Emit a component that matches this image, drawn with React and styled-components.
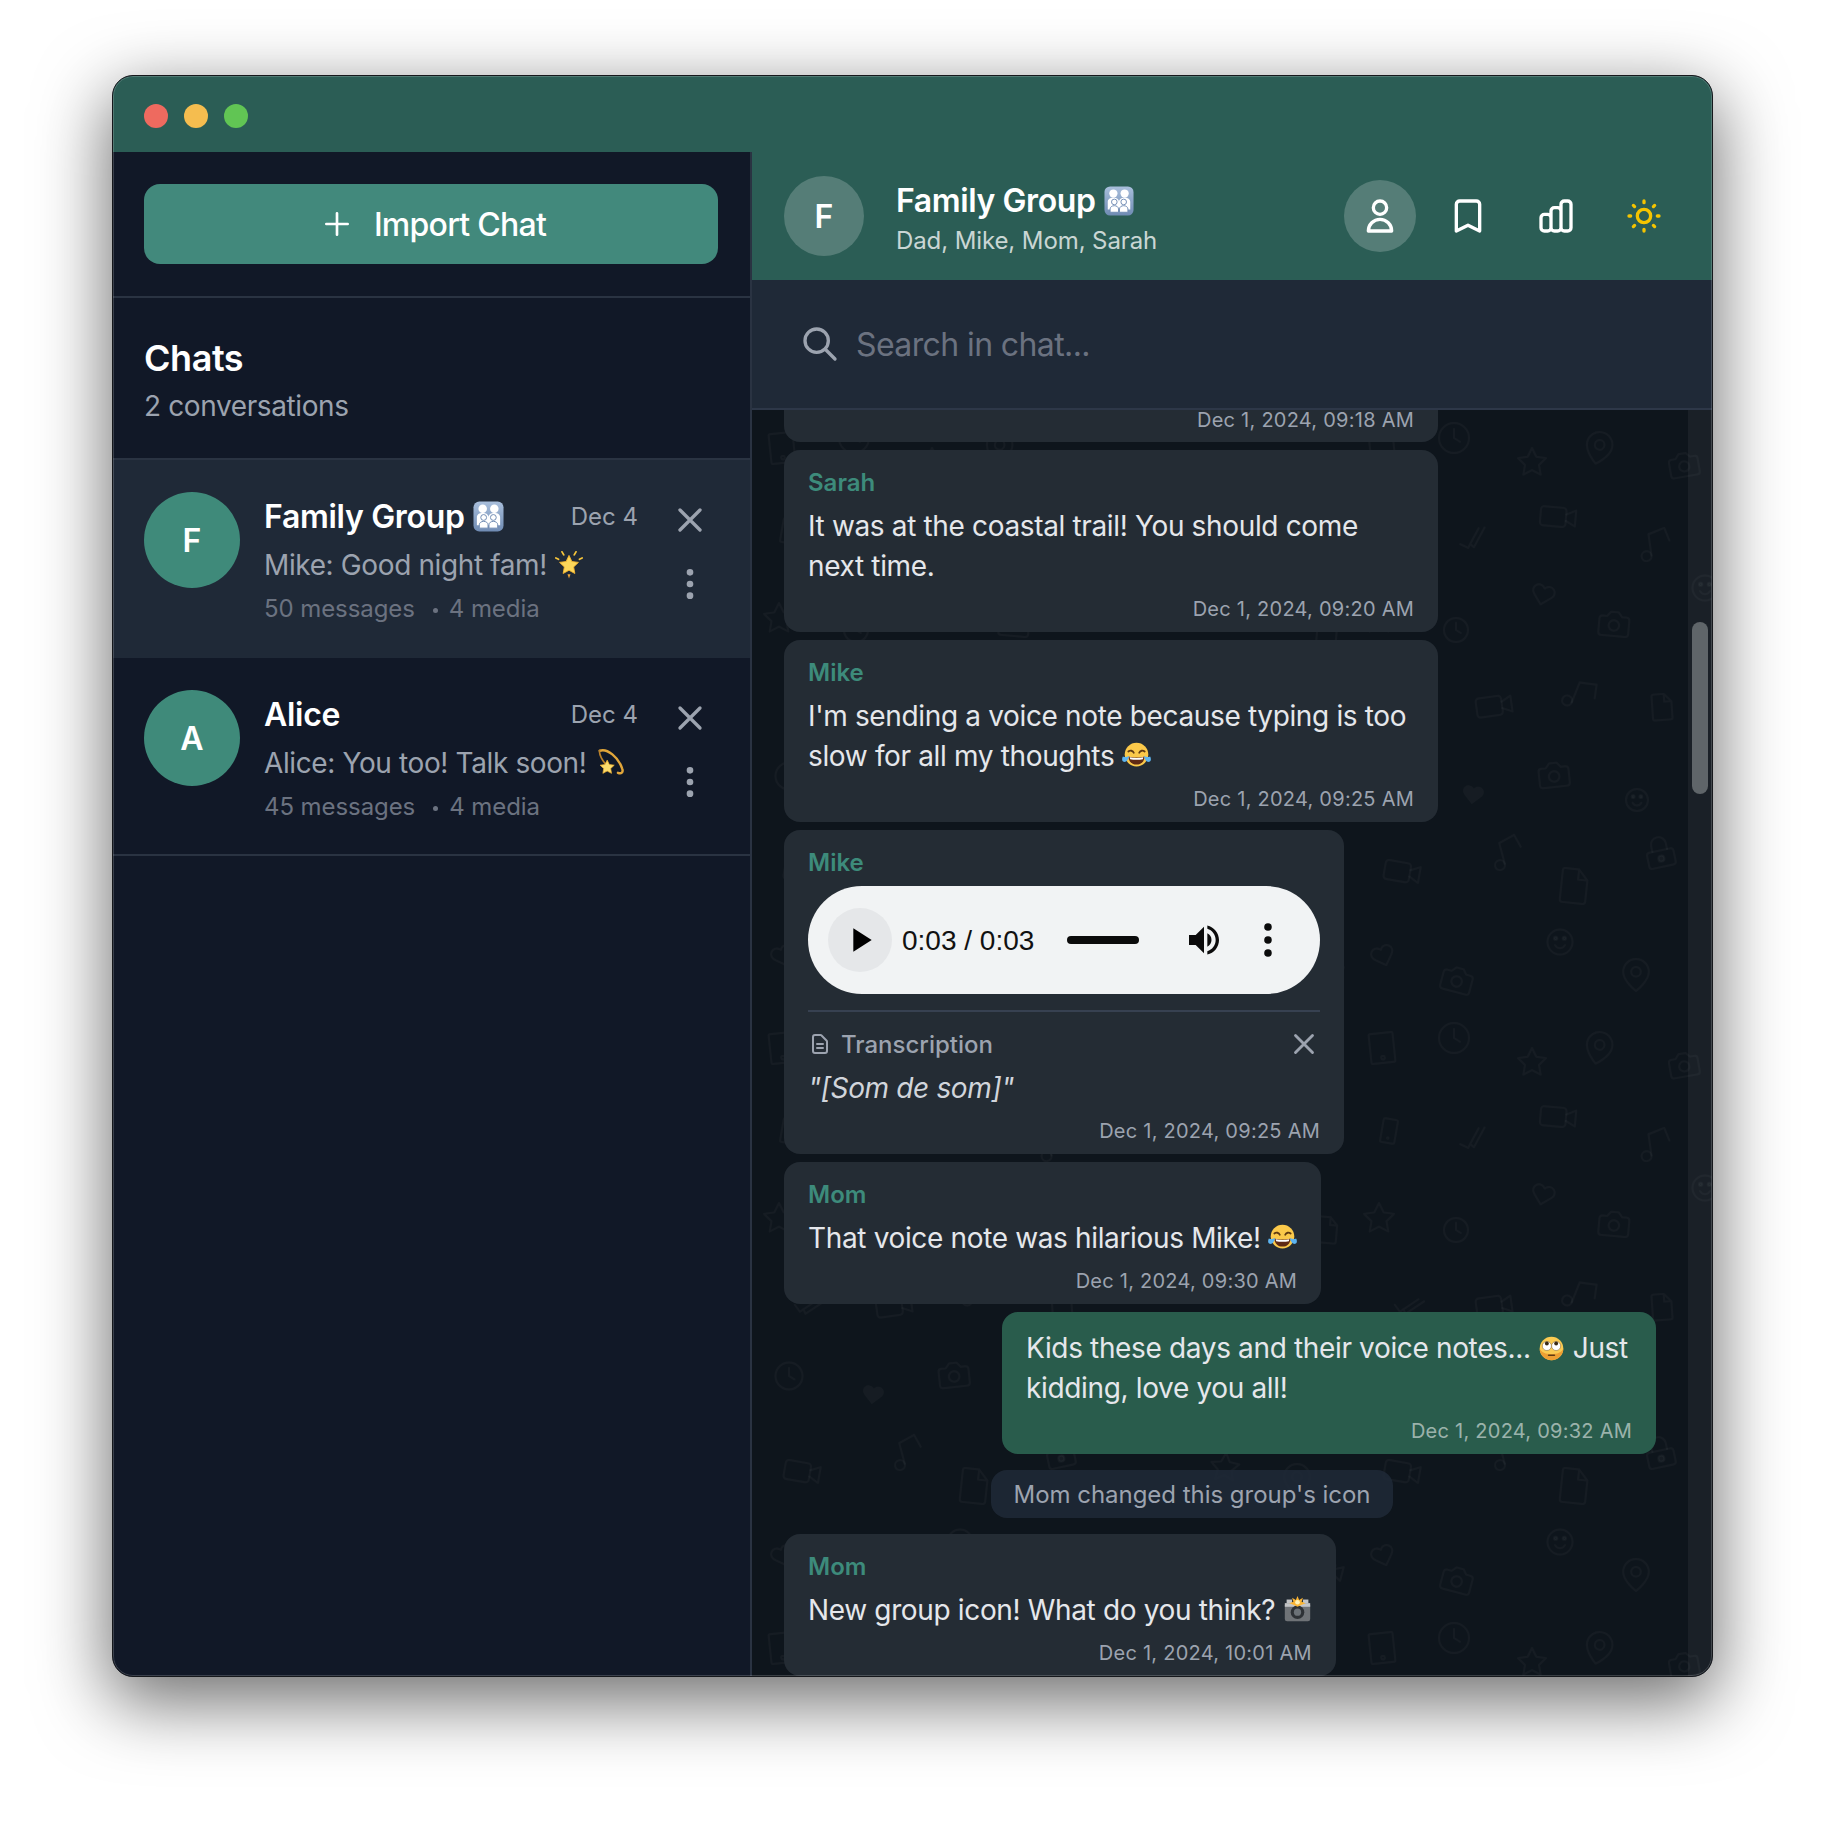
import React from "react";
import styled, { createGlobalStyle } from "styled-components";
import {
  HiOutlineBookmark,
  HiOutlineChartBar,
  HiOutlineDocumentText,
  HiOutlineDotsVertical,
  HiOutlinePlus,
  HiOutlineSearch,
  HiOutlineSun,
  HiOutlineUser,
  HiOutlineX
} from "react-icons/hi";
import { MdPlayArrow, MdVolumeUp } from "react-icons/md";

const GlobalStyle = createGlobalStyle`
  * { box-sizing: border-box; }
  html, body { margin: 0; background: #fff; }
  body { font-family: Inter, "Noto Sans", sans-serif; }
  button, input { font-family: inherit; }
`;

const Page = styled.div`
  width: 1824px;
  height: 1824px;
  padding: 75px 0 0 112px;
`;

const Window = styled.div`
  position: relative;
  width: 1601px;
  height: 1602px;
  display: flex;
  flex-direction: column;
  border: 1px solid #16181c;
  border-radius: 21px;
  overflow: hidden;
  background: #111827;
  box-shadow: 0 22px 70px 4px rgba(0, 0, 0, 0.56);
  &::after {
    content: "";
    position: absolute;
    inset: 0;
    border: 1px solid rgba(255, 255, 255, 0.18);
    border-radius: 20px;
    pointer-events: none;
  }
`;

const TitleBar = styled.div`
  flex: 0 0 76px;
  display: flex;
  align-items: center;
  gap: 16px;
  padding: 4px 0 0 31px;
  background: #2b5d55;
`;

const Light = styled.span`
  width: 24px;
  height: 24px;
  border-radius: 50%;
  background: ${(p) => p.$color};
`;

const Body = styled.div`
  flex: 1;
  min-height: 0;
  display: flex;
`;

const Sidebar = styled.aside`
  flex: 0 0 639px;
  display: flex;
  flex-direction: column;
  background: #111827;
  border-right: 2px solid #2a3342;
`;

const ImportArea = styled.div`
  padding: 32px 32px 32px 31px;
  border-bottom: 2px solid #2a3342;
`;

const ImportButton = styled.button`
  width: 100%;
  height: 80px;
  display: flex;
  align-items: center;
  justify-content: center;
  gap: 21px;
  padding: 0 0 0 5px;
  border: none;
  border-radius: 16px;
  background: #42897c;
  color: #fff;
  font-size: 32px;
  font-weight: 500;
  letter-spacing: -0.74px;
  cursor: pointer;
`;

const ChatsHeading = styled.div`
  height: 162px;
  padding: 36px 31px 0;
  border-bottom: 2px solid #2a3342;
`;

const ChatsTitle = styled.h2`
  margin: 0;
  font-size: 36px;
  line-height: 48px;
  font-weight: 600;
  letter-spacing: -0.45px;
  color: #fff;
`;

const ChatsCount = styled.p`
  margin: 4px 0 0;
  font-size: 28px;
  line-height: 40px;
  letter-spacing: -0.39px;
  color: #9ca3af;
`;

const ChatRow = styled.div`
  display: flex;
  gap: 24px;
  padding: 32px 32px 31px 31px;
  background: ${(p) => (p.$active ? "#1f2937" : "transparent")};
  border-bottom: 2px solid ${(p) => (p.$active ? "#1f2937" : "#2a3342")};
`;

const Avatar = styled.div`
  flex: 0 0 ${(p) => p.$size}px;
  height: ${(p) => p.$size}px;
  display: flex;
  align-items: center;
  justify-content: center;
  border-radius: 50%;
  background: ${(p) => p.$bg};
  color: #fff;
  font-size: 32px;
  font-weight: 600;
`;

const ChatInfo = styled.div`
  flex: 1;
  min-width: 0;
`;

const ChatTop = styled.div`
  display: flex;
  align-items: center;
  justify-content: space-between;
  height: 48px;
`;

const ChatName = styled.span`
  font-size: 32px;
  font-weight: 600;
  letter-spacing: -0.3px;
  color: #fff;
  white-space: nowrap;
`;

const ChatDate = styled.span`
  font-size: 24px;
  color: #9ca3af;
`;

const ChatPreview = styled.div`
  margin-top: 5px;
  font-size: 28px;
  line-height: 40px;
  letter-spacing: -0.38px;
  color: #9ca3af;
  white-space: nowrap;
`;

const ChatMeta = styled.div`
  display: flex;
  align-items: center;
  margin-top: 8px;
  font-size: 24px;
  line-height: 32px;
  letter-spacing: -0.08px;
  color: #6b7280;
`;

const MetaDot = styled.span`
  width: 5px;
  height: 5px;
  margin: 2px 11px 0 18px;
  border-radius: 50%;
  background: #6b7280;
`;

const ChatActions = styled.div`
  flex: 0 0 56px;
  display: flex;
  flex-direction: column;
  gap: 8px;
`;

const GhostButton = styled.button`
  width: ${(p) => p.$size || 56}px;
  height: ${(p) => p.$size || 56}px;
  display: flex;
  align-items: center;
  justify-content: center;
  padding: 0;
  border: none;
  border-radius: 50%;
  background: ${(p) => (p.$active ? "rgba(255, 255, 255, 0.2)" : "transparent")};
  color: ${(p) => p.$color || "#9ca3af"};
  cursor: pointer;
`;

const Main = styled.main`
  flex: 1;
  min-width: 0;
  display: flex;
  flex-direction: column;
`;

const ChatHeader = styled.header`
  flex: 0 0 128px;
  display: flex;
  align-items: center;
  gap: 32px;
  padding: 0 32px;
  background: #2b5d55;
`;

const HeaderInfo = styled.div`
  flex: 1;
  padding-top: 4px;
`;

const HeaderName = styled.div`
  font-size: 32px;
  line-height: 44px;
  font-weight: 600;
  letter-spacing: -0.4px;
  color: #fff;
`;

const HeaderSub = styled.div`
  margin-top: 2px;
  font-size: 24px;
  line-height: 32px;
  letter-spacing: -0.1px;
  color: rgba(255, 255, 255, 0.75);
`;

const HeaderTools = styled.div`
  display: flex;
  gap: 16px;
`;

const SearchBar = styled.div`
  flex: 0 0 130px;
  display: flex;
  align-items: center;
  gap: 14px;
  padding-left: 48px;
  background: #1f2937;
  border-bottom: 2px solid #2d3748;
  color: #9ca3af;
`;

const SearchInput = styled.input`
  flex: 1;
  border: none;
  outline: none;
  background: transparent;
  font-size: 32px;
  letter-spacing: -0.6px;
  color: #e5e7eb;
  &::placeholder {
    color: #6b7280;
    opacity: 1;
  }
`;

const Pane = styled.div`
  position: relative;
  flex: 1;
  min-height: 0;
  display: flex;
  background: #0e151c;
`;

const Wallpaper = styled.svg`
  position: absolute;
  inset: 0;
  width: 100%;
  height: 100%;
`;

const MessageList = styled.div`
  position: relative;
  flex: 1;
  min-width: 0;
  display: flex;
  flex-direction: column;
  gap: 8px;
  padding: 0 32px;
  overflow: hidden;
`;

const ScrollTrack = styled.div`
  position: relative;
  flex: 0 0 24px;
  padding: 212px 4px 0;
  background: rgba(255, 255, 255, 0.05);
`;

const ScrollThumb = styled.div`
  height: 172px;
  border-radius: 8px;
  background: #5f6569;
`;

const Bubble = styled.div`
  flex: 0 0 auto;
  align-self: ${(p) => (p.$mine ? "flex-end" : "flex-start")};
  max-width: 75%;
  padding: ${(p) => (p.$mine ? "16px" : "17px")} 24px 9px;
  border-radius: 16px;
  background: ${(p) => (p.$mine ? "#295c4c" : "#242c34")};
`;

const ClippedBubble = styled.div`
  flex: 0 0 32px;
  width: 654px;
  padding: 0 24px;
  border-radius: 0 0 16px 16px;
  background: #242c34;
`;

const ClippedTime = styled.div`
  font-size: 20px;
  line-height: 20px;
  letter-spacing: 0.25px;
  text-align: right;
  color: #9ca3af;
`;

const Sender = styled.div`
  margin-bottom: 7px;
  font-size: 24px;
  line-height: 32px;
  font-weight: 600;
  color: #3d8b7b;
`;

const MessageText = styled.div`
  font-size: 28px;
  line-height: 40px;
  letter-spacing: -0.35px;
  color: #e5e7eb;
`;

const Time = styled.div`
  margin-top: 9px;
  font-size: 20px;
  line-height: 28px;
  letter-spacing: 0.25px;
  text-align: right;
  color: ${(p) => (p.$mine ? "rgba(255, 255, 255, 0.55)" : "#9ca3af")};
`;

const SystemNote = styled.div`
  flex: 0 0 48px;
  align-self: center;
  margin: 8px 56px 8px 0;
  padding: 9px 23px 7px;
  border-radius: 16px;
  background: rgba(31, 41, 55, 0.88);
  font-size: 24px;
  line-height: 32px;
  letter-spacing: -0.03px;
  color: #9ca3af;
`;

const Player = styled.div`
  width: 512px;
  height: 108px;
  display: flex;
  align-items: center;
  padding-left: 20px;
  border-radius: 54px;
  background: #f1f3f4;
  color: #0b0b0b;
`;

const PlayButton = styled.div`
  width: 64px;
  height: 64px;
  display: flex;
  align-items: center;
  justify-content: center;
  border-radius: 50%;
  background: #e5e7e9;
  color: #000;
`;

const PlayerTime = styled.span`
  margin-left: 10px;
  padding-top: 2px;
  font-family: "Liberation Sans", Arial, sans-serif;
  font-size: 28px;
  color: #111;
  white-space: nowrap;
`;

const PlayerSlider = styled.div`
  width: 72px;
  height: 8px;
  margin-left: 33px;
  border-radius: 4px;
  background: #0b0b0b;
`;

const PlayerVolume = styled.div`
  display: flex;
  margin-left: 45px;
`;

const PlayerMenu = styled.svg`
  width: 8px;
  height: 34px;
  margin-left: 40px;
  fill: #0b0b0b;
`;

const Transcript = styled.div`
  margin-top: 16px;
  padding-top: 16px;
  border-top: 2px solid #374151;
`;

const TranscriptHead = styled.div`
  display: flex;
  align-items: center;
  height: 32px;
  margin-right: -1px;
  color: #9ca3af;
`;

const TranscriptLabel = styled.span`
  flex: 1;
  margin-left: 9px;
  font-size: 24px;
  font-weight: 500;
`;

const TranscriptText = styled.div`
  margin-top: 8px;
  font-size: 28px;
  line-height: 40px;
  font-style: italic;
  letter-spacing: -0.35px;
  color: #d1d5db;
`;

const EmojiBox = styled.svg`
  display: inline-block;
  width: ${(p) => p.$size}px;
  height: ${(p) => p.$size}px;
  margin-left: ${(p) => p.$gap ?? 0}px;
  vertical-align: ${(p) => p.$drop ?? -4}px;
`;

function Emoji({ name, size = 29, gap, drop }) {
  return (
    <EmojiBox viewBox="0 0 32 32" $size={size} $gap={gap} $drop={drop} role="img" aria-label={name}>
      {EMOJI[name]}
    </EmojiBox>
  );
}

const EMOJI = {
  family: (
    <>
      <defs>
        <linearGradient id="famBg" x1="0" y1="0" x2="0" y2="1">
          <stop offset="0" stopColor="#a9bfdc" />
          <stop offset="1" stopColor="#6f8bb3" />
        </linearGradient>
      </defs>
      <rect x="0.5" y="0.5" width="31" height="31" rx="6" fill="url(#famBg)" />
      <g fill="#fff">
        <circle cx="10" cy="8" r="4.4" />
        <circle cx="22" cy="8" r="4.4" />
        <path d="M4 25v-8c0-3 2.5-4.5 6-4.5s6 1.5 6 4.5c0-3 2.5-4.5 6-4.5s6 1.5 6 4.5v8z" />
      </g>
      <g fill="#fff" stroke="#6f8bb3" strokeWidth="1">
        <circle cx="11" cy="17" r="3" />
        <circle cx="21" cy="17" r="3" />
        <path d="M6.5 28v-3.5c0-2 2-3.5 4.5-3.5s4.5 1.5 4.5 3.5V28zM16.500 28v-3.500c0-2 2-3.500 4.500-3.500s4.500 1.500 4.500 3.500V28z" />
      </g>
    </>
  ),
  star: (
    <>
      <path d="M16 5l3.300 7 7.500 1-5.500 5.200 1.400 7.500-6.700-3.700-6.700 3.700 1.400-7.500L5.200 13l7.500-1z" fill="#fcd75a" stroke="#f5b52e" strokeWidth="1" />
      <path d="M8 1l2 3.500M24 1l-2 3.500M1 8l3 1.500M31 8l-3 1.500" stroke="#f7c53a" strokeWidth="2" strokeLinecap="round" />
      <path d="M14.300 26.500h3.400L16 31.500z" fill="#f2a93b" />
    </>
  ),
  dizzy: (
    <>
      <path d="M5 4c8-3 20 7 24 19 1.500 4-1 6-4.500 4.500" fill="none" stroke="#e2a63a" strokeWidth="2.600" strokeLinecap="round" />
      <path d="M5 4c-1 4 3 11 8 16" fill="none" stroke="#b9802a" strokeWidth="1.800" strokeLinecap="round" />
      <path d="M13 14l2.300 4.700 5.200.7-3.800 3.600.9 5.100-4.600-2.500-4.600 2.500.9-5.100-3.800-3.600 5.200-.7z" fill="#fbdc6c" stroke="#eeaf32" strokeWidth="0.800" />
    </>
  ),
  joy: (
    <>
      <circle cx="16" cy="15" r="13" fill="#fbc94a" />
      <path d="M7 11.500c2-1.500 5-1 6 1.500M25 11.500c-2-1.500-5-1-6 1.500" fill="none" stroke="#5f3a12" strokeWidth="2" strokeLinecap="round" />
      <path d="M7 17c5 1.500 13 1.500 18 0-.5 6-4 9-9 9s-8.500-3-9-9z" fill="#5f2a14" />
      <path d="M8.500 18c4.500 1 10.500 1 15 0l-.5 2c-4 .8-10 .8-14 0z" fill="#fff" />
      <path d="M1 17c2 1 4 1 7-.5-1 4-3 7-6 6.500-2-.5-2.500-3.500-1-6zM31 17c-2 1-4 1-7-.5 1 4 3 7 6 6.500 2-.5 2.500-3.500 1-6z" fill="#5db4f0" />
    </>
  ),
  eyeroll: (
    <>
      <circle cx="16" cy="16" r="14" fill="#fbcb52" />
      <path d="M2 16a14 14 0 0028 0c-3 9-25 9-28 0z" fill="#ee9f33" />
      <circle cx="10.500" cy="13" r="5.400" fill="#fff" stroke="#7a5a24" strokeWidth="0.600" />
      <circle cx="21.500" cy="13" r="5.400" fill="#fff" stroke="#7a5a24" strokeWidth="0.600" />
      <circle cx="10.500" cy="10" r="2.300" fill="#3b2a16" />
      <circle cx="21.500" cy="10" r="2.300" fill="#3b2a16" />
      <path d="M12.500 24h7" stroke="#5f3a12" strokeWidth="1.800" strokeLinecap="round" />
    </>
  ),
  flash: (
    <>
      <rect x="2" y="9" width="28" height="20" rx="2.500" fill="#6f7377" />
      <rect x="2" y="9" width="28" height="4" fill="#c2c4c6" />
      <rect x="4" y="5" width="6" height="4" fill="#c2c4c6" />
      <rect x="22" y="5" width="6" height="4" fill="#c2c4c6" />
      <circle cx="16" cy="19" r="7.500" fill="#2e3236" />
      <circle cx="16" cy="19" r="4" fill="#6c7277" />
      <path d="M16 1l1.800 4.500L22 3l-1.500 4.500L25 9l-5 2-4 2-4-2-5-2 4.500-1.500L10 3l4.200 2.500z" fill="#fbb534" />
      <circle cx="16" cy="8" r="2.600" fill="#fff3b8" />
    </>
  )
};

const WALL_SHAPES = {
  camera: (
    <>
      <path d="M14.500 4h-5L7 7H4a2 2 0 0 0-2 2v9a2 2 0 0 0 2 2h16a2 2 0 0 0 2-2V9a2 2 0 0 0-2-2h-3l-2.500-3z" />
      <circle cx="12" cy="13" r="3.500" />
    </>
  ),
  video: (
    <>
      <rect x="1" y="6" width="16" height="12" rx="2" />
      <path d="M17 10l6-3v10l-6-3" />
    </>
  ),
  note: (
    <>
      <path d="M9 18V5l10-2.500 2 8" />
      <circle cx="6" cy="18" r="3" />
    </>
  ),
  doc: <path d="M14 2H6a1.500 1.500 0 0 0-1.500 1.500v17A1.500 1.500 0 0 0 6 22h12a1.500 1.500 0 0 0 1.500-1.500V8zM14 2v6h5.500" />,
  lock: (
    <>
      <rect x="3" y="11" width="18" height="11" rx="2" />
      <path d="M7 11V7a5 5 0 0 1 10 0v4" />
      <circle cx="12" cy="16.500" r="2" fill="currentColor" />
    </>
  ),
  heart: <path d="M20.800 4.600a5.500 5.500 0 0 0-7.800 0L12 5.700l-1-1.100a5.500 5.500 0 0 0-7.800 7.800l1 1.100L12 21.200l7.800-7.800 1-1.100a5.500 5.500 0 0 0 0-7.700z" />,
  solidHeart: <path fill="currentColor" stroke="none" d="M20.800 4.600a5.500 5.500 0 0 0-7.800 0L12 5.700l-1-1.100a5.500 5.500 0 0 0-7.800 7.800l1 1.100L12 21.200l7.800-7.800 1-1.100a5.500 5.500 0 0 0 0-7.700z" />,
  smile: (
    <>
      <circle cx="12" cy="12" r="10" />
      <path d="M8 14.500s1.500 2.500 4 2.500 4-2.500 4-2.500" />
      <circle cx="8.500" cy="9" r="1.300" fill="currentColor" />
      <circle cx="15.500" cy="9" r="1.300" fill="currentColor" />
    </>
  ),
  pin: (
    <>
      <path d="M20 10c0 6-8 12-8 12s-8-6-8-12a8 8 0 0 1 16 0z" />
      <circle cx="12" cy="10" r="3" />
    </>
  ),
  tablet: (
    <>
      <rect x="4" y="2" width="16" height="20" rx="0.800" />
      <circle cx="12" cy="18.500" r="1.200" />
    </>
  ),
  clock: (
    <>
      <circle cx="12" cy="12" r="10" />
      <path d="M12 6v6l4 2.500" />
    </>
  ),
  star: <path d="M12 2l3.090 6.260L22 9.270l-5 4.870 1.180 6.880L12 17.770l-6.180 3.250L7 14.140 2 9.270l6.910-1.010z" />,
  phone: (
    <>
      <rect x="6" y="2" width="12" height="20" rx="1.500" />
      <circle cx="12" cy="18" r="0.500" />
    </>
  ),
  check: <path d="M1 14l6 4L18 3M9 15l3 3L23 3" />
};

// tile positions measured off the reference, [shape, x, y, rotate, scale]
const WALL_ITEMS = [
  ["clock", 102, 28, 0, 1.5],
  ["star", 180, 52, 0, 1.4],
  ["pin", 247, 38, 12, 1.6],
  ["camera", 332, 55, -10, 1.45],
  ["video", 206, 107, 5, 1.6],
  ["check", 121, 130, -8, 1.2],
  ["note", 303, 135, -8, 1.65],
  ["heart", 191, 185, 15, 1.05],
  ["camera", 262, 214, 5, 1.5],
  ["clock", 104, 220, 0, 1.2],
  ["video", 142, 296, -8, 1.6],
  ["note", 228, 285, 22, 1.65],
  ["doc", 310, 297, -4, 1.3],
  ["check", 56, 297, 20, 1.2],
  ["camera", 202, 365, -6, 1.5],
  ["solidHeart", 121, 385, 8, 1.0],
  ["clock", 37, 366, 0, 1.35],
  ["smile", 285, 390, 0, 1.1],
  ["lock", 308, 442, -12, 1.5],
  ["video", 50, 462, 10, 1.6],
  ["note", 155, 443, -15, 1.65],
  ["doc", 222, 476, 6, 1.7],
  ["smile", 208, 532, 0, 1.25],
  ["heart", 31, 546, -20, 1.05],
  ["camera", 105, 570, 15, 1.5],
  ["pin", 284, 565, 0, 1.6],
  ["tablet", 30, 38, -6, 1.5],
  ["phone", 37, 121, 10, 1.2],
  ["star", 27, 208, 0, 1.5],
  ["smile", 353, 178, 0, 1.25],
  ["star", 473, 457, 5, 1.4],
  ["pin", 545, 470, 0, 1.6],
  ["doc", 575, 220, 5, 1.3],
  ["video", 575, 560, 15, 1.4]
];

function WallpaperPattern() {
  return (
    <Wallpaper aria-hidden="true">
      <defs>
        <pattern id="chatWall" width="600" height="600" patternUnits="userSpaceOnUse">
          <g fill="none" stroke="currentColor" color="rgba(255,255,255,0.032)" strokeLinejoin="round" strokeLinecap="round">
            {WALL_ITEMS.map(([shape, x, y, r, s], i) => (
              <g key={i} transform={`translate(${x} ${y}) rotate(${r}) scale(${s}) translate(-12 -12)`} strokeWidth={1.9 / s}>
                {WALL_SHAPES[shape]}
              </g>
            ))}
          </g>
        </pattern>
      </defs>
      <rect width="100%" height="100%" fill="url(#chatWall)" />
    </Wallpaper>
  );
}

function ChatEntry({ active, letter, name, nameEmoji, preview, emoji, emojiSize, messages }) {
  return (
    <ChatRow $active={active}>
      <Avatar $size={96} $bg="#3f8a7a">{letter}</Avatar>
      <ChatInfo>
        <ChatTop>
          <ChatName>
            {name}
            {nameEmoji && <Emoji name={nameEmoji} size={31} gap={8} />}
          </ChatName>
          <ChatDate>Dec 4</ChatDate>
        </ChatTop>
        <ChatPreview>
          {preview} <Emoji name={emoji} size={emojiSize} gap={1} />
        </ChatPreview>
        <ChatMeta>
          <span>{messages} messages</span>
          <MetaDot />
          <span>4 media</span>
        </ChatMeta>
      </ChatInfo>
      <ChatActions>
        <GhostButton aria-label="Remove chat"><HiOutlineX size={40} /></GhostButton>
        <GhostButton aria-label="Chat options"><HiOutlineDotsVertical size={40} /></GhostButton>
      </ChatActions>
    </ChatRow>
  );
}

function Message({ sender, time, mine, children }) {
  return (
    <Bubble $mine={mine}>
      {sender && <Sender>{sender}</Sender>}
      <MessageText>{children}</MessageText>
      <Time $mine={mine}>{time}</Time>
    </Bubble>
  );
}

export default function App() {
  return (
    <Page>
      <GlobalStyle />
      <Window>
        <TitleBar>
          <Light $color="#ee6a5f" />
          <Light $color="#f5bd4f" />
          <Light $color="#61c554" />
        </TitleBar>
        <Body>
          <Sidebar>
            <ImportArea>
              <ImportButton>
                <HiOutlinePlus size={32} />
                Import Chat
              </ImportButton>
            </ImportArea>
            <ChatsHeading>
              <ChatsTitle>Chats</ChatsTitle>
              <ChatsCount>2 conversations</ChatsCount>
            </ChatsHeading>
            <ChatEntry
              active
              letter="F"
              name="Family Group"
              nameEmoji="family"
              preview="Mike: Good night fam!"
              emoji="star"
              emojiSize={28}
              messages={50}
            />
            <ChatEntry
              letter="A"
              name="Alice"
              preview="Alice: You too! Talk soon!"
              emoji="dizzy"
              emojiSize={30}
              messages={45}
            />
          </Sidebar>
          <Main>
            <ChatHeader>
              <Avatar $size={80} $bg="rgba(255, 255, 255, 0.2)">F</Avatar>
              <HeaderInfo>
                <HeaderName>
                  Family Group
                  <Emoji name="family" size={30} gap={8} />
                </HeaderName>
                <HeaderSub>Dad, Mike, Mom, Sarah</HeaderSub>
              </HeaderInfo>
              <HeaderTools>
                <GhostButton $size={72} $active $color="#fff" aria-label="Profile"><HiOutlineUser size={40} /></GhostButton>
                <GhostButton $size={72} $color="#fff" aria-label="Bookmarks"><HiOutlineBookmark size={40} /></GhostButton>
                <GhostButton $size={72} $color="#fff" aria-label="Stats"><HiOutlineChartBar size={40} /></GhostButton>
                <GhostButton $size={72} $color="#f5c400" aria-label="Theme"><HiOutlineSun size={40} /></GhostButton>
              </HeaderTools>
            </ChatHeader>
            <SearchBar>
              <HiOutlineSearch size={40} />
              <SearchInput placeholder="Search in chat..." />
            </SearchBar>
            <Pane>
              <WallpaperPattern />
              <MessageList>
                <ClippedBubble>
                  <ClippedTime>Dec 1, 2024, 09:18 AM</ClippedTime>
                </ClippedBubble>
                <Message sender="Sarah" time="Dec 1, 2024, 09:20 AM">
                  It was at the coastal trail! You should come next time.
                </Message>
                <Message sender="Mike" time="Dec 1, 2024, 09:25 AM">
                  I'm sending a voice note because typing is too slow for all my thoughts <Emoji name="joy" />
                </Message>
                <Bubble>
                  <Sender>Mike</Sender>
                  <Player>
                    <PlayButton><MdPlayArrow size={40} /></PlayButton>
                    <PlayerTime>0:03 / 0:03</PlayerTime>
                    <PlayerSlider />
                    <PlayerVolume><MdVolumeUp size={40} /></PlayerVolume>
                    <PlayerMenu viewBox="0 0 8 34">
                      <circle cx="4" cy="4" r="3.800" />
                      <circle cx="4" cy="17" r="3.800" />
                      <circle cx="4" cy="30" r="3.800" />
                    </PlayerMenu>
                  </Player>
                  <Transcript>
                    <TranscriptHead>
                      <HiOutlineDocumentText size={24} />
                      <TranscriptLabel>Transcription</TranscriptLabel>
                      <HiOutlineX size={34} />
                    </TranscriptHead>
                    <TranscriptText>"[Som de som]"</TranscriptText>
                  </Transcript>
                  <Time>Dec 1, 2024, 09:25 AM</Time>
                </Bubble>
                <Message sender="Mom" time="Dec 1, 2024, 09:30 AM">
                  That voice note was hilarious Mike! <Emoji name="joy" />
                </Message>
                <Message mine time="Dec 1, 2024, 09:32 AM">
                  Kids these days and their voice notes... <Emoji name="eyeroll" size={27} /> Just kidding, love you all!
                </Message>
                <SystemNote>Mom changed this group's icon</SystemNote>
                <Message sender="Mom" time="Dec 1, 2024, 10:01 AM">
                  New group icon! What do you think? <Emoji name="flash" />
                </Message>
              </MessageList>
              <ScrollTrack>
                <ScrollThumb />
              </ScrollTrack>
            </Pane>
          </Main>
        </Body>
      </Window>
    </Page>
  );
}
